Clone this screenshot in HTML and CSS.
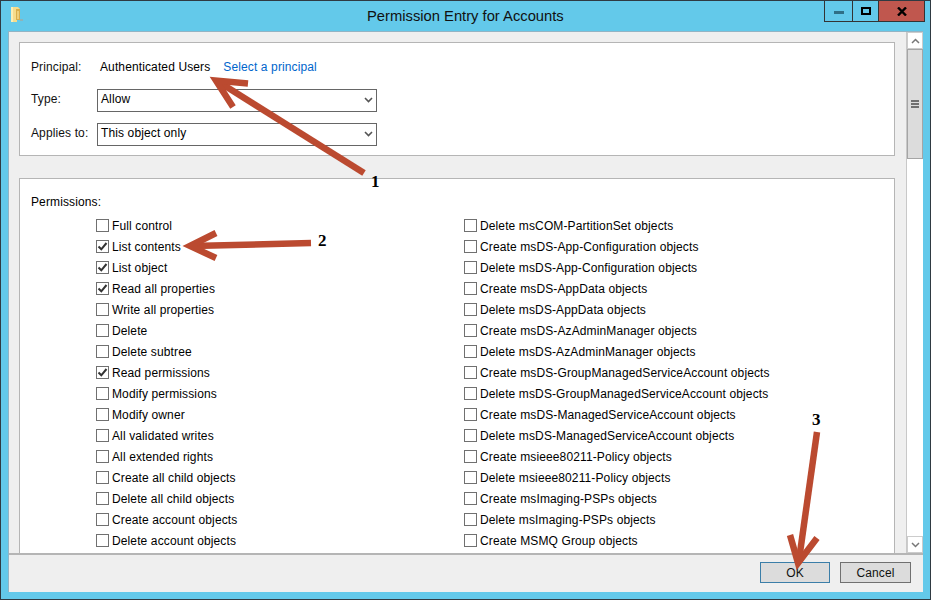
FILE: index.html
```html
<!DOCTYPE html>
<html lang="en">
<head>
<meta charset="utf-8">
<title>Permission Entry for Accounts</title>
<link rel="stylesheet" href="styles.css">
</head>
<body>
<div class="window">
  <header class="titlebar">
    <svg class="app-icon" width="13" height="16" viewBox="0 0 13 16"><path d="M9 12h3v2H9z" fill="#8fb3b8"/><path d="M0 0h7l2 2v11H6v2H0z" fill="#f5dc8c"/><path d="M5 2h4v11H5z" fill="#d9ae4a"/><path d="M6 4h2v8H6z" fill="#edcf7a"/><path d="M0 0h2v15H0z" fill="#fbeeb4"/></svg>
    <h1 class="title">Permission Entry for Accounts</h1>
    <div class="controls">
      <div class="ctl ctl-min"><span class="min-glyph"></span></div>
      <div class="ctl ctl-max"><span class="max-glyph"></span></div>
      <div class="ctl ctl-close"><svg width="10" height="9" viewBox="0 0 10 9"><path d="M1 0.5 9 8.500M9 0.5 1 8.500" stroke="#000" stroke-width="2.400" fill="none"/></svg></div>
    </div>
  </header>
  <div class="client">
    <div class="body">
      <main class="content">
        <section class="panel panel-top">
          <div class="field principal"><span class="label">Principal:</span><span class="user">Authenticated Users</span><a class="link">Select a principal</a></div>
          <div class="field"><span class="label">Type:</span><div class="select"><span>Allow</span><svg width="9" height="6" viewBox="0 0 9 6"><path d="M1 1 4.500 4.500 8 1" stroke="#555" stroke-width="1.600" fill="none"/></svg></div></div>
          <div class="field"><span class="label">Applies to:</span><div class="select"><span>This object only</span><svg width="9" height="6" viewBox="0 0 9 6"><path d="M1 1 4.500 4.500 8 1" stroke="#555" stroke-width="1.600" fill="none"/></svg></div></div>
        </section>
        <section class="panel panel-perms">
          <div class="perms-title">Permissions:</div>
          <div class="perms-grid">
            <ul class="perm-list">
              <li><i class="box"></i>Full control</li>
              <li><i class="box on"><svg width="11" height="11" viewBox="0 0 11 11"><path d="M1.500 5.500 4.300 8.300 9.500 2" stroke="#333" stroke-width="2" fill="none"/></svg></i>List contents</li>
              <li><i class="box on"><svg width="11" height="11" viewBox="0 0 11 11"><path d="M1.500 5.500 4.300 8.300 9.500 2" stroke="#333" stroke-width="2" fill="none"/></svg></i>List object</li>
              <li><i class="box on"><svg width="11" height="11" viewBox="0 0 11 11"><path d="M1.500 5.500 4.300 8.300 9.500 2" stroke="#333" stroke-width="2" fill="none"/></svg></i>Read all properties</li>
              <li><i class="box"></i>Write all properties</li>
              <li><i class="box"></i>Delete</li>
              <li><i class="box"></i>Delete subtree</li>
              <li><i class="box on"><svg width="11" height="11" viewBox="0 0 11 11"><path d="M1.500 5.500 4.300 8.300 9.500 2" stroke="#333" stroke-width="2" fill="none"/></svg></i>Read permissions</li>
              <li><i class="box"></i>Modify permissions</li>
              <li><i class="box"></i>Modify owner</li>
              <li><i class="box"></i>All validated writes</li>
              <li><i class="box"></i>All extended rights</li>
              <li><i class="box"></i>Create all child objects</li>
              <li><i class="box"></i>Delete all child objects</li>
              <li><i class="box"></i>Create account objects</li>
              <li><i class="box"></i>Delete account objects</li>
            </ul>
            <ul class="perm-list">
              <li><i class="box"></i>Delete msCOM-PartitionSet objects</li>
              <li><i class="box"></i>Create msDS-App-Configuration objects</li>
              <li><i class="box"></i>Delete msDS-App-Configuration objects</li>
              <li><i class="box"></i>Create msDS-AppData objects</li>
              <li><i class="box"></i>Delete msDS-AppData objects</li>
              <li><i class="box"></i>Create msDS-AzAdminManager objects</li>
              <li><i class="box"></i>Delete msDS-AzAdminManager objects</li>
              <li><i class="box"></i>Create msDS-GroupManagedServiceAccount objects</li>
              <li><i class="box"></i>Delete msDS-GroupManagedServiceAccount objects</li>
              <li><i class="box"></i>Create msDS-ManagedServiceAccount objects</li>
              <li><i class="box"></i>Delete msDS-ManagedServiceAccount objects</li>
              <li><i class="box"></i>Create msieee80211-Policy objects</li>
              <li><i class="box"></i>Delete msieee80211-Policy objects</li>
              <li><i class="box"></i>Create msImaging-PSPs objects</li>
              <li><i class="box"></i>Delete msImaging-PSPs objects</li>
              <li><i class="box"></i>Create MSMQ Group objects</li>
            </ul>
          </div>
        </section>
      </main>
      <aside class="scrollbar">
        <div class="sb-btn"><svg width="9" height="6" viewBox="0 0 9 6"><path d="M1 5 4.500 1.500 8 5" stroke="#777" stroke-width="1.500" fill="none"/></svg></div>
        <div class="sb-thumb"><span></span><span></span><span></span></div>
        <div class="sb-track"></div>
        <div class="sb-btn"><svg width="9" height="6" viewBox="0 0 9 6"><path d="M1 1 4.500 4.500 8 1" stroke="#777" stroke-width="1.500" fill="none"/></svg></div>
      </aside>
    </div>
    <footer class="footer">
      <button class="btn btn-default">OK</button>
      <button class="btn">Cancel</button>
    </footer>
  </div>
  <svg class="arrows" width="931" height="600" viewBox="0 0 931 600">
    <g fill="none" stroke="#bb4a30" stroke-width="6.500">
      <path d="M364 173 222 84"/>
      <path d="M248 83.500 216 80.500 233 107"/>
      <path d="M311 243 192 246"/>
      <path d="M216 233 190 246 216 258"/>
      <path d="M817 432 799 560"/>
      <path d="M790 535 798 563 817 538"/>
    </g>
  </svg>
  <span class="num num1">1</span>
  <span class="num num2">2</span>
  <span class="num num3">3</span>
</div>
</body>
</html>
```
FILE: styles.css
```css
* { box-sizing: border-box; }
html, body { margin: 0; padding: 0; }
body { width: 931px; height: 600px; overflow: hidden; font-family: "Liberation Sans", Arial, sans-serif; font-size: 12px; letter-spacing: 0.12px; color: #000; }
.window { position: relative; width: 931px; height: 600px; background: #63c9ea; border: 1px solid #2f3a42; padding: 0 7px 7px; display: flex; flex-direction: column; }
.titlebar { height: 30px; flex: none; display: flex; align-items: flex-start; position: relative; }
.app-icon { margin: 6px 0 0 3px; }
.title { position: absolute; left: 359px; top: 7px; margin: 0; font-size: 14.75px; font-weight: 400; letter-spacing: 0; color: #111; white-space: nowrap; }
.controls { margin-left: auto; margin-right: -2px; display: flex; height: 21px; border: 1px solid #333; border-top: 0; }
.ctl { display: flex; align-items: center; justify-content: center; height: 20px; }
.ctl-min { width: 28px; border-right: 1px solid #333; }
.ctl-max { width: 26px; border-right: 1px solid #333; }
.ctl-close { width: 45px; background: #c0574e; }
.min-glyph { width: 10px; height: 3px; background: #2f6f86; margin-top: 3px; }
.max-glyph { width: 10px; height: 8px; border: 2px solid #000; }
.client { flex: 1; min-height: 0; background: #efefef; border: 1px solid #93b4c4; border-bottom: 0; border-right: 0; display: flex; flex-direction: column; }
.body { flex: 1; min-height: 0; display: flex; }
.content { flex: 1; min-width: 0; padding: 10px 11px 0 10px; display: flex; flex-direction: column; gap: 22px; overflow: hidden; }
.panel { background: #fff; border: 1px solid #b5b5b5; }
.panel-top { height: 114px; flex: none; padding: 14px 0 0 11px; display: flex; flex-direction: column; gap: 10px; }
.field { display: flex; align-items: center; height: 24px; }
.principal { height: 20px; margin-bottom: 1px; }
.label { width: 66px; flex: none; color: #111; }
.field:not(.principal) .label { padding-bottom: 2px; }
.user { margin-left: 3px; margin-right: 13px; }
.link { color: #0066cc; }
.select { width: 280px; height: 23px; border: 1px solid #666; background: #fff; display: flex; align-items: center; justify-content: space-between; padding: 0 3px 0 3px; }
.select span { padding-bottom: 2px; }
.panel-perms { flex: 1; min-height: 0; border-bottom: 0; padding: 16px 0 0 11px; overflow: hidden; }
.perms-title { height: 20px; line-height: 14px; }
.perms-grid { display: grid; grid-template-columns: 368px 1fr; margin-left: 65px; }
.perm-list { list-style: none; margin: 0; padding: 0; }
.perm-list li { height: 21px; display: flex; align-items: center; white-space: nowrap; }
.box { width: 13px; height: 13px; flex: none; border: 1px solid #707070; margin-right: 3px; background: #fff; display: flex; align-items: center; justify-content: center; }
.scrollbar { width: 17px; flex: none; margin-right: 0; display: flex; flex-direction: column; background: #fff; border-left: 1px solid #c8c8c8; }
.sb-btn { height: 17px; flex: none; display: flex; align-items: center; justify-content: center; background: #fff; border: 1px solid #ccc; }
.sb-thumb { height: 110px; flex: none; background: #dcdcdc; border: 1px solid #a5a5a5; display: flex; flex-direction: column; align-items: center; justify-content: center; gap: 1px; }
.sb-thumb span { width: 8px; height: 2px; background: #707070; }
.sb-track { flex: 1; }
.footer { height: 39px; flex: none; border-top: 2px solid #b5b5b5; display: flex; justify-content: flex-end; align-items: flex-start; gap: 10px; padding: 7px 12px 0 0; }
.btn { width: 71px; height: 21px; background: #dcdcdc; border: 1px solid #707070; font: 12px "Liberation Sans", Arial, sans-serif; letter-spacing: 0.12px; color: #111; padding: 0; }
.btn-default { width: 70px; border-color: #3b7ea8; }
.arrows { position: absolute; left: -1px; top: -1px; pointer-events: none; }
.num { position: absolute; font-family: "Liberation Serif", serif; font-weight: 700; font-size: 17px; line-height: 18px; letter-spacing: 0; color: #000; }
.num1 { left: 370px; top: 172px; }
.num2 { left: 317px; top: 231px; }
.num3 { left: 811px; top: 410px; }
```
